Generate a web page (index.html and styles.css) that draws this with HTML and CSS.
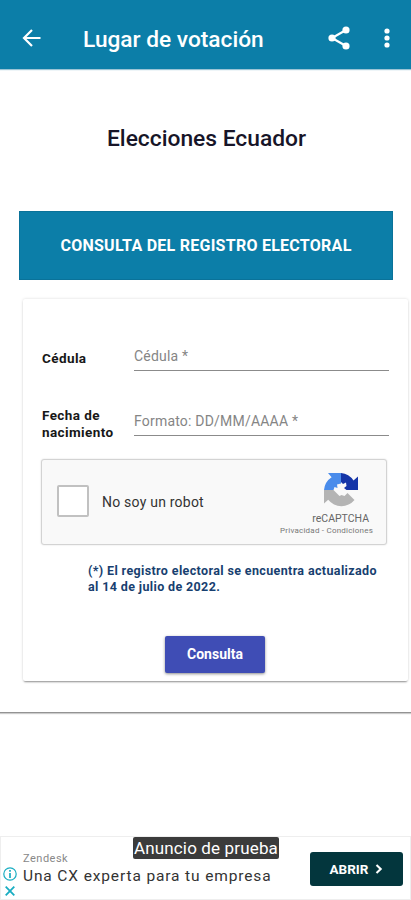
FILE: index.html
```html
<!DOCTYPE html>
<html lang="es">
<head>
<meta charset="utf-8">
<meta name="viewport" content="width=device-width, initial-scale=1">
<title>Lugar de votación</title>
<link rel="stylesheet" href="styles.css">
</head>
<body>
<header class="bar">
  <svg class="back" viewBox="0 0 20 20" width="20" height="20"><path d="M18.5 10H2.2M10 2L2 10l8 8" fill="none" stroke="#fff" stroke-width="2.2"/></svg>
  <h1 class="bar-title">Lugar de votación</h1>
  <svg class="share" viewBox="0 0 22 24" width="22" height="24"><path d="M18 4L4 12l14 8" fill="none" stroke="#fff" stroke-width="2.2"/><g fill="#fff"><circle cx="18" cy="4" r="3.6"/><circle cx="4" cy="12" r="3.6"/><circle cx="18" cy="20" r="3.6"/></g></svg>
  <svg class="more" viewBox="0 0 6 20" width="6" height="20" fill="#fff"><circle cx="3" cy="3" r="2.6"/><circle cx="3" cy="10" r="2.6"/><circle cx="3" cy="17" r="2.6"/></svg>
</header>
<main class="page">
  <h2 class="heading"><span>Elecciones Ecuador</span></h2>
  <div class="banner"><span>CONSULTA DEL REGISTRO ELECTORAL</span></div>
  <section class="card">
    <div class="row row-id"><label class="label" for="id">Cédula</label><input class="field" id="id" placeholder="Cédula *"></div>
    <div class="row row-date"><label class="label" for="date">Fecha de nacimiento</label><input class="field" id="date" placeholder="Formato: DD/MM/AAAA *"></div>
    <div class="captcha">
      <span class="check"></span>
      <span class="robot">No soy un robot</span>
      <div class="brand">
        <svg class="logo" viewBox="0 0 36 36" width="36" height="36">
          <path fill="#4a8ceb" d="M18 1H5l3.6 4.2A17 17 0 0 0 1 18h9.500l1-3 3 1-.5-3.500 4-1z"/>
          <path fill="#1535a8" d="M18 1v9l2 2 3-1.500.5 3.500-2.500 2 2.500 2h11.500V4.500l-4.500 4A17 17 0 0 0 18 1z"/>
          <path fill="#b4b4b4" d="M1 18v13.500l4.200-3.700A17 17 0 0 0 31.500 28L24.500 21l-3 3-3-1-2 1-3-3-3-3z"/>
        </svg>
        <span class="brand-name">reCAPTCHA</span>
        <span class="legal">Privacidad - Condiciones</span>
      </div>
    </div>
    <p class="note"><span class="n1">(*) El registro electoral se encuentra actualizado</span><br><span class="n2">al 14 de julio de 2022.</span></p>
    <button class="submit">Consulta</button>
  </section>
</main>
<footer class="ad">
  <div class="ad-icons">
    <svg viewBox="0 0 14 14" width="14" height="14" fill="none" stroke="#19adc2" stroke-width="1.2"><circle cx="7" cy="7" r="6.2"/><path d="M7 6v5M7 3v1.7" stroke-width="1.7"/></svg>
    <svg viewBox="0 0 10 10" width="10" height="10" stroke="#19adc2" stroke-width="1.8"><path d="M.7.7l8.6 8.6M9.3.7L.7 9.3"/></svg>
  </div>
  <div class="ad-copy"><span class="ad-brand">Zendesk</span><span class="ad-line">Una CX experta para tu empresa</span></div>
  <a class="cta"><span>ABRIR</span><svg viewBox="0 0 8 10" width="8" height="10"><path d="M1.500 1l4.200 4-4.200 4" fill="none" stroke="#fff" stroke-width="2.1"/></svg></a>
  <span class="test">Anuncio de prueba</span>
</footer>
</body>
</html>
```
FILE: styles.css
```css
* { box-sizing: border-box; }
body { margin: 0; height: 900px; display: flex; flex-direction: column; background: #fff; font-family: Roboto, sans-serif; overflow: hidden; }
.bar { height: 69px; flex: none; background: #0c7ea8; display: flex; align-items: center; padding: 7px 21px 0 22px; box-shadow: 0 1px 1px #9bc4d5; }
.bar svg { flex: none; }
.bar .back { margin-top: -1px; }
.bar-title { margin: 4px 0 0 41px; flex: 1; font-size: 22.7px; line-height: 28px; font-weight: 500; color: #fff; white-space: nowrap; }
.more { margin-left: 34px; }
.page { height: 644px; flex: none; border-bottom: 1px solid #939393; box-shadow: 0 1px 1px #ccc; }
.heading { margin: 0; padding-top: 56px; height: 142px; text-align: center; font-size: 22.8px; line-height: 28px; font-weight: 500; color: #171528; padding-left: 2px; }
.banner { margin: 0 18px 0 19px; height: 69px; background: #0c7ea8; border: 1px solid #0a7299; color: #fff; font-weight: 700; font-size: 16px; letter-spacing: .26px; display: flex; align-items: center; justify-content: center; white-space: nowrap; }
.card { margin: 19px 3px 0 23px; height: 382px; padding: 37px 19px 0; border-radius: 2px; background: #fff; box-shadow: 0 2px 2px -1px rgba(0,0,0,.4), 0 0 3px rgba(0,0,0,.15); }
.row { display: flex; }
.label { width: 92px; font-size: 13.5px; line-height: 17px; font-weight: 700; color: #171717; letter-spacing: .4px; }
.row-id { height: 35px; }
.row-id .label { padding-top: 14px; }
.row-date { height: 65px; }
.row-date .label { padding-top: 36px; }
.field { width: 255px; padding: 0 0 3px; margin: 0; border: 0; border-bottom: 1px solid #8b8b8b; border-radius: 0; background: none; font: 14px/20px Roboto, sans-serif; letter-spacing: .2px; height: 26px; align-self: flex-end; outline: 0; }
.field::placeholder { color: #858585; opacity: 1; }
.captcha { margin: 23px 0 0 -1px; width: 346px; height: 86px; border: 1px solid #d3d3d3; border-radius: 3px; background: #f9f9f9; box-shadow: 0 0 2px #ddd; display: flex; align-items: center; padding: 0 13px 0 15px; }
.check { width: 32px; height: 32px; border: 2px solid #c1c1c1; border-radius: 2px; background: #fff; margin-top: -2px; }
.robot { margin-left: 13px; font-size: 14px; letter-spacing: .22px; color: #333; white-space: nowrap; }
.brand { margin-left: auto; align-self: stretch; display: flex; flex-direction: column; align-items: flex-end; padding-top: 12px; }
.logo { margin-right: 14px; }
.brand-name { margin: 4px 4px 0 0; font-size: 10.5px; line-height: 13px; color: #666; }
.legal { font-size: 8px; line-height: 12px; letter-spacing: .22px; color: #777; white-space: nowrap; }
.note { margin: 18px 0 0 46px; font-size: 12.5px; line-height: 16px; font-weight: 700; letter-spacing: .37px; color: #183f70; white-space: nowrap; }
.submit { display: block; margin: 41px 0 0 123px; width: 100px; height: 37px; padding: 0 0 2px; border: 0; border-radius: 2px; background: #3f4db5; color: #fff; font: 700 14px Roboto, sans-serif; box-shadow: 0 1px 3px rgba(0,0,0,.45); }
.ad { position: relative; margin-top: auto; height: 64px; flex: none; border: 1px solid #eee; display: flex; background: #fff; }
.ad-icons { width: 22px; padding: 30px 0 0 2px; display: flex; flex-direction: column; gap: 5px; }
.ad-icons svg:last-child { margin-left: 2px; }
.ad-copy { flex: 1; display: flex; flex-direction: column; padding-top: 15px; white-space: nowrap; }
.ad-brand { font-size: 11px; line-height: 14px; color: #888; letter-spacing: .5px; }
.ad-line { font-size: 15.5px; line-height: 20px; color: #333; letter-spacing: .87px; }
.cta { width: 93px; height: 34px; margin: 15px 7px 0 0; padding-bottom: 1px; border-radius: 3px; background: #03363d; display: flex; align-items: center; justify-content: center; gap: 7px; color: #fff; font-size: 13.5px; font-weight: 700; }
.test { position: absolute; left: 132px; top: 0; width: 146px; height: 22px; border-radius: 2px; background: #3b3b3b; color: #fff; text-align: center; font-size: 17px; line-height: 23px; letter-spacing: .15px; white-space: nowrap; }
```
